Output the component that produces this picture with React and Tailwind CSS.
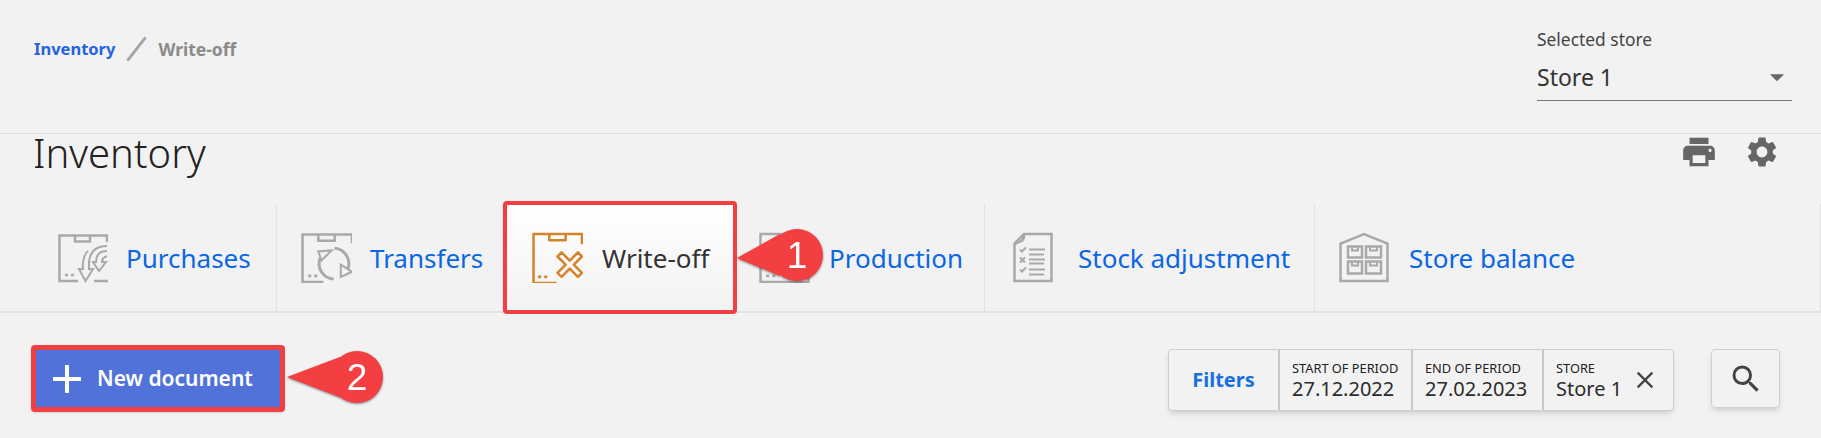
import React from "react";
import { MdPrint, MdSettings, MdSearch, MdClose, MdArrowDropDown } from "react-icons/md";

const PurchasesIcon = () => (
  <svg viewBox="0 0 50 50" className="w-[50px] h-[50px]" fill="none" stroke="#a9a9a9" strokeWidth="2.500">
    <path d="M49 9V2.500H1.500V48H20M36 48h14" />
    <path d="M17 2.500v6h15v-6" />
    <path d="M7 42h3M13 42h3" />
    <path d="M49 13C38 13 32 19 31 29v7h4L27.500 48 21 36h4c-1-8 2-16 5-18" strokeWidth="2" />
    <path d="M49 18c-7 0-11 4-11 11h-3l6 9 7-9h-4c0-3 2-5 5-6" strokeWidth="2" />
  </svg>
);

const TransfersIcon = () => (
  <svg viewBox="0 0 50 50" className="w-[51px] h-[51px]" fill="none" stroke="#a9a9a9" strokeWidth="2.500">
    <path d="M50 11V2.500H1.500V49H22" />
    <path d="M17 2.500v6h16v-6" />
    <path d="M7 43h3M13 43h3" />
    <path d="M33 16a15 15 0 0 1 13 20" strokeWidth="3" />
    <path d="M32 46A15 15 0 0 1 19 25" strokeWidth="3" />
    <path d="M39 32l11 7-11 5zM17 19l13-1-10 10z" strokeWidth="2" />
  </svg>
);

const WriteOffIcon = () => (
  <svg viewBox="0 0 50 50" className="w-[51px] h-[51px]" fill="none" stroke="#d5842e" strokeWidth="2.500" strokeLinejoin="round">
    <path d="M49 12V2H1.500v48H24" />
    <path d="M17 2v6h16V2" />
    <path d="M6 44h3M12 44h3" />
    <path d="M25 24l4-4 8 8 8-8 4 4-8 8 8 8-4 4-8-8-8 8-4-4 8-8z" />
  </svg>
);

const ProductionIcon = () => (
  <svg viewBox="0 0 50 50" className="w-[51px] h-[51px]" fill="none" stroke="#a9a9a9" strokeWidth="2.500">
    <path d="M1.500 49V2h47v47z" />
    <path d="M20 2v14h10V2M7 43h3M13 43h3" />
  </svg>
);

const StockIcon = () => (
  <svg viewBox="0 0 40 50" className="w-[40px] h-[51px]" fill="none" stroke="#a9a9a9" strokeWidth="2.500">
    <path d="M11 1.500h27.500v47h-37V11z" />
    <path d="M11 1.500c1 5-2 8-9 9.500M11 2l-2 7" />
    <path d="M7 17l2 2 4-4M7 37l2 2 4-4M7 25l5 5M12 25l-5 5" strokeWidth="2" />
    <path d="M16 17h16M16 22h15M16 27h16M16 31h15M16 37h16M16 42h15" strokeWidth="2.200" />
  </svg>
);

const BalanceIcon = () => (
  <svg viewBox="0 0 50 50" className="w-[50px] h-[51px]" fill="none" stroke="#a9a9a9" strokeWidth="2.500">
    <path d="M1.500 48.500V11L25 1.500 48.500 11v37.500z" />
    <path d="M9 14h14v11H9zM27 14h15v11H27zM9 29h14v12H9zM27 29h15v12H27z" strokeWidth="2.500" />
    <path d="M13 14v4h6v-4M31 14v4h7v-4M13 29v4h6v-4M31 29v4h7v-4" strokeWidth="2" />
  </svg>
);

const tabs = [
  { label: "Purchases", Icon: PurchasesIcon, cls: "w-[277px] pl-[58px] gap-[18px]" },
  { label: "Transfers", Icon: TransfersIcon, cls: "w-[226px] pl-[24px] gap-[18px]" },
];
const tabsAfter = [
  { label: "Production", Icon: ProductionIcon, cls: "w-[248px] pl-[22px] gap-[19px]" },
  { label: "Stock adjustment", Icon: StockIcon, cls: "w-[330px] pl-[28px] gap-[25px]" },
  { label: "Store balance", Icon: BalanceIcon, cls: "flex-1 pl-[24px] gap-[20px]" },
];

const Tab = ({ label, Icon, cls }) => (
  <a className={`flex items-center border-r border-[#e2e2e2] text-[#0b66e4] ${cls}`}>
    <Icon />
    <span className="mt-[2px]">{label}</span>
  </a>
);

const Chip = ({ title, value, cls, children }) => (
  <div className={`flex items-center justify-between border-l-2 border-[#c9c9c9] ${cls}`}>
    <div className="flex flex-col">
      <span className="text-[12.8px] leading-[17px] text-[#222]">{title}</span>
      <span className="text-[20px] leading-[24px] text-[#2b2b2b]">{value}</span>
    </div>
    {children}
  </div>
);

const Callout = ({ n, cls, w, h, points, cx, cy }) => (
  <svg width={w} height={h} className={`absolute drop-shadow-[0_1px_1px_rgba(0,0,0,0.45)] ${cls}`}>
    <polygon points={points} fill="#f33f42" />
    <circle cx={cx} cy={cy} r="26" fill="#f33f42" />
    <text x={cx} y={cy + 13} textAnchor="middle" fontSize="37" fill="#fff" fontFamily="Liberation Sans">{n}</text>
  </svg>
);

export default function App() {
  return (
    <div className="relative h-[438px] w-full overflow-hidden bg-[#f2f2f2] font-['Noto_Sans',sans-serif]">
      <header className="flex h-[134px] justify-between border-b border-[#dedede] pl-[34px] pr-[29px]">
        <nav className="mt-[37px] flex h-[24px] items-center font-bold">
          <a className="text-[16.5px] text-[#2563e0]">Inventory</a>
          <span className="ml-[20px] h-[30px] w-[3px] rotate-[38deg] rounded bg-[#a6a6a6]" />
          <span className="ml-[20px] text-[17.5px] text-[#8a8a8a]">Write-off</span>
        </nav>
        <div className="mt-[28px] w-[255px]">
          <div className="text-[17.400px] leading-[22px] text-[#444]">Selected store</div>
          <div className="mt-[4px] flex h-[47px] items-center justify-between border-b border-[#777] text-[23px] text-[#333]">
            <span>Store 1</span>
            <MdArrowDropDown className="-mr-[2px] h-[34px] w-[34px] text-[#666]" />
          </div>
        </div>
      </header>

      <div className="flex h-[70px] justify-between pl-[33px] pr-[41px]">
        <h1 className="text-[40px] font-light leading-[38px] text-[#222]">Inventory</h1>
        <div className="flex h-[36px] items-center gap-[26px] text-[#666]">
          <MdPrint className="h-[38px] w-[38px]" />
          <MdSettings className="h-[36px] w-[36px]" />
        </div>
      </div>

      <div className="flex h-[109px] items-stretch border-b-2 border-[#e2e2e2] text-[26px]">
        {tabs.map((t) => <Tab key={t.label} {...t} />)}
        <a className="-my-[3px] flex w-[234px] items-center gap-[19px] rounded-[4px] border-4 border-[#f13f42] bg-gradient-to-b from-white to-[#f2f2f2] pl-[25px] text-[#333]">
          <WriteOffIcon />
          <span className="mt-[2px]">Write-off</span>
        </a>
        {tabsAfter.map((t) => <Tab key={t.label} {...t} />)}
      </div>

      <div className="flex items-start justify-between pl-[31px] pr-[41px] pt-[32px]">
        <button className="flex h-[67px] w-[254px] items-center gap-[16px] rounded-[4px] border-[5px] border-[#f13f42] bg-[#5072d9] pl-[17px] text-[21px] font-semibold text-white shadow-sm">
          <svg viewBox="0 0 28 28" className="h-[28px] w-[28px]" stroke="#fff" strokeWidth="4"><path d="M14 0v28M0 14h28" /></svg>
          New document
        </button>
        <div className="mt-[4px] flex items-start gap-[37px]">
          <div className="flex h-[62px] rounded-[4px] border border-[#cfcfcf] bg-[#f2f2f2] shadow-md">
            <button className="w-[109px] text-[20px] font-bold text-[#1a6fe0]">Filters</button>
            <Chip title="START OF PERIOD" value="27.12.2022" cls="w-[133px] pl-[12px]" />
            <Chip title="END OF PERIOD" value="27.02.2023" cls="w-[131px] pl-[12px]" />
            <Chip title="STORE" value="Store 1" cls="w-[131px] pl-[12px] pr-[14px]">
              <MdClose className="h-[28px] w-[28px] text-[#444]" />
            </Chip>
          </div>
          <button className="flex h-[59px] w-[69px] items-center justify-center rounded-[4px] border border-[#cfcfcf] shadow-md">
            <MdSearch className="h-[36px] w-[36px] text-[#444]" />
          </button>
        </div>
      </div>

      <Callout n="1" cls="left-[737px] top-[225px]" w={90} h={60} points="0,33 43,9 43,51" cx={60} cy={30} />
      <Callout n="2" cls="left-[287px] top-[347px]" w={100} h={60} points="0,30 53,10 60,53" cx={70} cy={30} />
    </div>
  );
}
